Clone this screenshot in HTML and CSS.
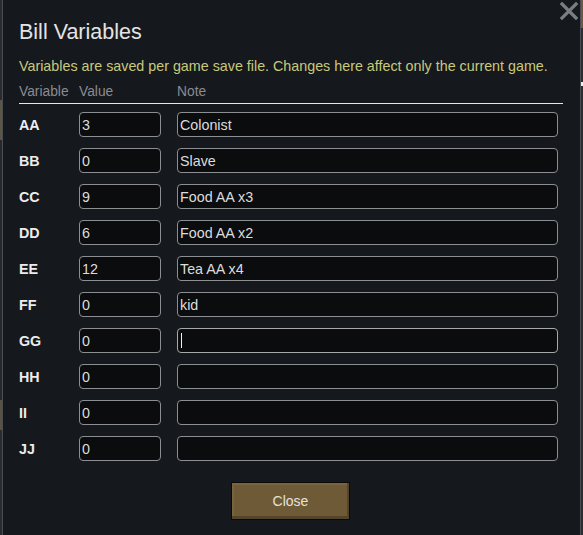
FILE: index.html
```html
<!DOCTYPE html>
<html lang="en">
<head>
    <meta charset="UTF-8">
    <title>Bill Variables</title>
    <link rel="stylesheet" href="styles.css">
</head>
<body>
    <div class="scene">
        <div class="edge edge-left"></div>

        <div class="dialog">
            <span class="dialog-close">
                <svg width="20" height="18" viewBox="0 0 20 18">
                    <path d="M3 2 L17 16 M17 2 L3 16" stroke="#7c7d80" stroke-width="3.2" stroke-linecap="square"/>
                </svg>
            </span>

            <h1 class="title">Bill Variables</h1>
            <p class="hint">Variables are saved per game save file. Changes here affect only the current game.</p>

            <div class="table-head">
                <span class="col-var">Variable</span>
                <span class="col-val">Value</span>
                <span class="col-note">Note</span>
            </div>

            <div class="rows">
                <div class="row"><span class="name">AA</span><div class="field val">3</div><div class="field note">Colonist</div></div>
                <div class="row"><span class="name">BB</span><div class="field val">0</div><div class="field note">Slave</div></div>
                <div class="row"><span class="name">CC</span><div class="field val">9</div><div class="field note">Food AA x3</div></div>
                <div class="row"><span class="name">DD</span><div class="field val">6</div><div class="field note">Food AA x2</div></div>
                <div class="row"><span class="name">EE</span><div class="field val">12</div><div class="field note">Tea AA x4</div></div>
                <div class="row"><span class="name">FF</span><div class="field val">0</div><div class="field note">kid</div></div>
                <div class="row"><span class="name">GG</span><div class="field val">0</div><div class="field note focused"><span class="caret"></span></div></div>
                <div class="row"><span class="name">HH</span><div class="field val">0</div><div class="field note"></div></div>
                <div class="row"><span class="name">II</span><div class="field val">0</div><div class="field note"></div></div>
                <div class="row"><span class="name">JJ</span><div class="field val">0</div><div class="field note"></div></div>
            </div>

            <div class="actions">
                <button class="close-button">Close</button>
            </div>
        </div>

        <div class="edge edge-right"></div>
    </div>
</body>
</html>
```

FILE: styles.css
```css
body {
    margin: 0;
    padding: 0;
    background-color: #1b1d20;
    font-family: "Liberation Sans", Arial, sans-serif;
    color: #e0e0e0;
}

.scene {
    display: flex;
    width: 583px;
    height: 535px;
    overflow: hidden;
}

/* кусочки игрового фона по краям */
.edge {
    flex: none;
    background: linear-gradient(to bottom, #2a2b2c 0, #2a2b2c 100px, #5d5445 100px, #5d5445 140px, #26282b 140px, #26282b 400px, #5b5141 400px, #5b5141 430px, #2a2c2f 430px);
}

.edge-left {
    width: 2px;
}

.edge-right {
    width: 2px;
    background: linear-gradient(to bottom, #6b5a3c 0, #6b5a3c 28px, #2b2d30 28px, #2b2d30 82px, #eeeeee 82px, #eeeeee 86px, #2b2d30 86px);
}

.dialog {
    position: relative;
    flex: 1;
    background-color: #15181d;
    border-left: 1px solid #4a4d52;
    border-right: 1px solid #4a4d52;
    padding: 0 17px 0 16px;
}

.dialog-close {
    position: absolute;
    top: 2px;
    right: 1px;
}

.title {
    margin: 20px 0 0 0;
    font-size: 21.5px;
    font-weight: normal;
    line-height: 24px;
    color: #e4e4e4;
}

.hint {
    margin: 14px 0 0 0;
    font-size: 14.3px;
    line-height: 16px;
    color: #c9c97c;
}

.table-head {
    display: flex;
    margin-top: 10px;
    padding-bottom: 3px;
    border-bottom: 1px solid #e8e8e8;
    font-size: 13.8px;
    line-height: 16px;
    color: #8a8c90;
}

.col-var {
    width: 60px;
}

.col-val {
    width: 98px;
}

.rows {
    display: flex;
    flex-direction: column;
    gap: 11px;
    margin-top: 8px;
    margin-right: 5px;
}

.row {
    display: flex;
    align-items: center;
    height: 25px;
}

.name {
    width: 60px;
    font-size: 14.3px;
    font-weight: bold;
    color: #ececec;
}

.field {
    box-sizing: border-box;
    height: 25px;
    border: 1px solid #8d8e91;
    border-radius: 4px;
    background-color: #0b0c0e;
    padding: 0 2px;
    font-size: 14.3px;
    line-height: 24px;
    color: #dcdcdc;
}

.val {
    width: 82px;
    margin-right: 16px;
}

.note {
    flex: 1;
}

.focused {
    border-color: #a8a9ab;
}

.caret {
    display: inline-block;
    width: 1px;
    height: 15px;
    margin-top: 4px;
    margin-left: 1px;
    background-color: #f0f0f0;
    vertical-align: top;
}

.actions {
    display: flex;
    justify-content: center;
    margin-top: 21px;
    margin-right: 1px;
}

.close-button {
    width: 119px;
    height: 38px;
    border: 1px solid #0a0a0a;
    background-color: #6e5a37;
    box-shadow: inset -2px -3px 0 #54442a, inset 2px 2px 0 #7a6440;
    font-family: "Liberation Sans", Arial, sans-serif;
    font-size: 14px;
    color: #e6e2d8;
    padding: 0;
}
```
